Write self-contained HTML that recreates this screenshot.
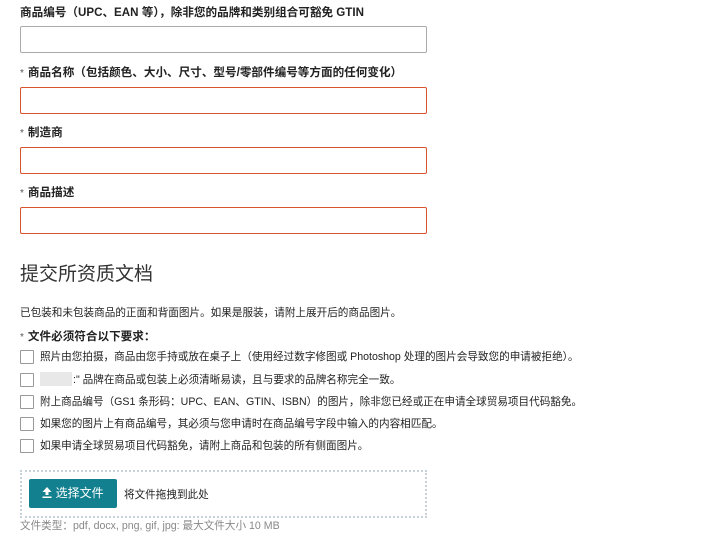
<!DOCTYPE html>
<html><head><meta charset="utf-8"><style>
body{margin:0;width:719px;height:550px;background:#fff;font-family:"Liberation Sans","Noto Sans CJK SC",sans-serif;color:#111;position:relative;overflow:hidden}
.a{position:absolute;white-space:nowrap}
.lbl{font-size:11.6px;font-weight:bold;color:#222}
.star{color:#555;font-weight:normal;font-size:10px;margin-right:4px}
.inp{position:absolute;left:20px;width:405px;height:25px;border:1px solid #aaa;border-radius:2px;background:#fff}
.err{border-color:#d9532c}
.cb{position:absolute;left:20px;width:12px;height:12px;border:1px solid #999;border-radius:1px;background:#fff}
.t{font-size:10.6px;color:#222}
</style></head><body>
<div class="a lbl" style="left:20px;top:4px">商品编号（UPC、EAN 等），除非您的品牌和类别组合可豁免 GTIN</div>
<div class="inp" style="top:26px"></div>
<div class="a lbl" style="left:20px;top:64px"><span class="star">*</span>商品名称（包括颜色、大小、尺寸、型号/零部件编号等方面的任何变化）</div>
<div class="inp err" style="top:87px"></div>
<div class="a lbl" style="left:20px;top:124px"><span class="star">*</span>制造商</div>
<div class="inp err" style="top:147px"></div>
<div class="a lbl" style="left:20px;top:184px"><span class="star">*</span>商品描述</div>
<div class="inp err" style="top:207px"></div>
<div class="a" style="left:20px;top:259px;font-size:19px;color:#333">提交所资质文档</div>
<div class="a t" style="left:20px;top:305px">已包装和未包装商品的正面和背面图片。如果是服装，请附上展开后的商品图片。</div>
<div class="a lbl" style="left:20px;top:328px"><span class="star">*</span>文件必须符合以下要求：</div>
<div class="cb" style="top:350px"></div><div class="a t" style="left:40px;top:349px">照片由您拍摄，商品由您手持或放在桌子上（使用经过数字修图或 Photoshop 处理的图片会导致您的申请被拒绝）。</div>
<div class="cb" style="top:373px"></div><div class="a" style="left:40px;top:372px;width:32px;height:14px;background:#e8e8e8"></div><div class="a t" style="left:73px;top:372px">:" 品牌在商品或包装上必须清晰易读，且与要求的品牌名称完全一致。</div>
<div class="cb" style="top:395px"></div><div class="a t" style="left:40px;top:394px">附上商品编号（GS1 条形码：UPC、EAN、GTIN、ISBN）的图片，除非您已经或正在申请全球贸易项目代码豁免。</div>
<div class="cb" style="top:417px"></div><div class="a t" style="left:40px;top:416px">如果您的图片上有商品编号，其必须与您申请时在商品编号字段中输入的内容相匹配。</div>
<div class="cb" style="top:439px"></div><div class="a t" style="left:40px;top:438px">如果申请全球贸易项目代码豁免，请附上商品和包装的所有侧面图片。</div>
<div class="a" style="left:20px;top:470px;width:403px;height:44px;border:2px dotted #c5d3d8"></div>
<div class="a" style="left:29px;top:479px;width:88px;height:29px;background:#13808f;border-radius:2px;color:#fff;font-size:12px;line-height:29px;text-align:center">
<svg width="10" height="11" viewBox="0 0 10 11" style="vertical-align:-1px"><path d="M5 0L9.5 5H6.5V8H3.5V5H0.5Z M0.5 9.5H9.5V11H0.5Z" fill="#fff"/></svg> 选择文件</div>
<div class="a t" style="left:124px;top:487px">将文件拖拽到此处</div>
<div class="a" style="left:20px;top:518px;font-size:10.6px;color:#888">文件类型：pdf, docx, png, gif, jpg: 最大文件大小 10 MB</div>
</body></html>
